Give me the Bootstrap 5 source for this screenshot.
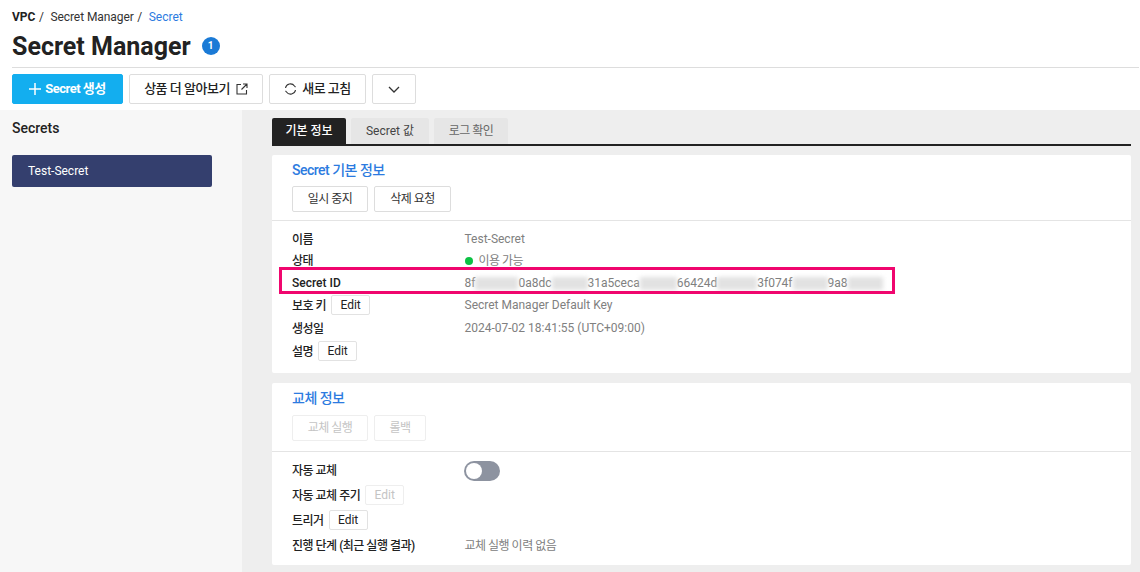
<!DOCTYPE html>
<html lang="ko">
<head>
<meta charset="UTF-8">
<title>Secret Manager</title>
<link href="https://cdn.jsdelivr.net/npm/bootstrap@5.3.2/dist/css/bootstrap.min.css" rel="stylesheet">
<style>
html, body { height: 572px; overflow: hidden; }
body { font-family: Roboto, "Noto Sans CJK KR", sans-serif; font-size: 12px; color: #222; background: #eee; }
.ko { letter-spacing: -0.5px; }
.top-area { background: #fff; height: 110px; padding: 1px 1px 0 12px; }
.crumbs { height: 27px; padding-top: 9px; line-height: 14px; color: #333; }
.crumbs b { font-weight: 700; color: #222; }
.crumb-name { letter-spacing: -0.07px; }
.crumb-sep { margin: 0 6.5px 0 3.5px; }
.crumbs .here { color: #2c7be0; }
.page-title { height: 36px; margin: 0 0 3px; gap: 11px; }
.page-title h1 { font-size: 25px; font-weight: 700; margin: 0; padding-top: 2px; line-height: 30px; color: #222; }
.info-dot { width: 18px; height: 18px; border-radius: 50%; background: #1a7ad6; color: #fff; font-size: 10px; font-weight: 700; line-height: 18px; text-align: center; }
.top-btns { border-top: 1px solid #ddd; padding-top: 6px; gap: 6px; }
.plain-btn { height: 30px; background: #fff; border: 1px solid #ddd; border-radius: 2px; color: #222; font-size: 13px; font-weight: 500; padding: 0; display: inline-flex; align-items: center; justify-content: center; }
.create-btn { width: 111px; background: #13aeef; border-color: #13aeef; color: #fff; font-weight: 700; gap: 4px; }
.btn-more { width: 134px; gap: 6px; }
.btn-refresh { width: 97px; gap: 5px; }
.btn-caret { width: 44px; }
.body-area { height: 462px; }
.side-col { width: 242px; background: #f7f7f7; padding: 10px 30px 0 12px; flex: none; }
.side-col h2 { font-size: 14px; font-weight: 500; line-height: 16px; margin: 0 0 19px; color: #222; }
.side-item { height: 32px; background: #343f6e; color: #fff; border-radius: 2px; padding-left: 16px; line-height: 32px; }
.main-col { flex: 1; padding: 8px 9px 0 30px; }
.tab-row { gap: 5px; border-bottom: 2px solid #222; height: 28px; }
.tab-cell { width: 78px; height: 26px; background: #e6e6e6; color: #444; text-align: center; line-height: 26px; border-radius: 2px 2px 0 0; }
.tab-cell.on { width: 74px; background: #222; color: #fff; font-weight: 500; }
.tab-cell.dim { width: 74px; color: #666; }
.panel { background: #fff; border-radius: 2px; margin-top: 9px; }
.panel + .panel { margin-top: 10px; }
.panel-head { height: 66px; border-bottom: 1px solid #e4e4e4; padding: 7px 20px 0; }
.panel-head h3 { font-size: 14px; font-weight: 500; color: #2c7be0; line-height: 16px; margin: 0 0 8px; }
.head-tall { height: 69px; }
.head-tall h3 { margin-bottom: 9px; }
.head-btns { gap: 6px; }
.head-btns .plain-btn { height: 26px; font-size: 12px; font-weight: 400; color: #333; }
.w-76 { width: 76px; }
.w-77 { width: 77px; }
.w-52 { width: 52px; }
.off-btn { color: #c4c4c4 !important; border-color: #eee !important; }
.info-rows { padding: 7px 20px 10px; }
.info-rows.swap-rows { padding: 6px 20px 7px; }
.info-line { height: 21.5px; align-items: center; color: #808080; position: relative; }
.id-line { height: 22.5px; }
.tall-line { height: 23px; }
.swap-rows .info-line { height: 25px; }
.info-label { width: 172.5px; color: #222; font-weight: 500; gap: 5px; align-items: center; flex: none; }
.lbl { display: block; padding-top: 2px; }
.val-low { padding-top: 2px; }
.edit-btn { width: 39px; height: 20px; background: #fff; border: 1px solid #e2e2e2; border-radius: 2px; color: #222; font-size: 12px; line-height: 18px; text-align: center; padding: 0; letter-spacing: 0; }
.green-dot { width: 8px; height: 8px; border-radius: 50%; background: #0cc244; margin-right: 6px; }
.smudge { display: block; height: 13px; background: #e2e2e2; filter: blur(2px); }
.fz-a { width: 43px; }
.fz-b { width: 36px; }
.fz-c { width: 37px; }
.fz-d { width: 40px; }
.fz-e { width: 35px; }
.mark-box { position: absolute; left: -13px; top: -4px; width: 616px; height: 27px; border: 3px solid #f0066e; pointer-events: none; }
.toggle-off { width: 36px; height: 20px; border-radius: 10px; background: #8d93a0; position: relative; display: block; margin: 1px 0 0 -1px; }
.toggle-off::after { content: ""; position: absolute; left: 2px; top: 2px; width: 16px; height: 16px; border-radius: 50%; background: #fff; }
</style>
</head>
<body>
<div class="top-area">
  <div class="crumbs d-flex"><b>VPC</b><span class="crumb-sep">/</span><span class="crumb-name">Secret Manager</span><span class="crumb-sep">/</span><span class="here">Secret</span></div>
  <div class="page-title d-flex align-items-center">
    <h1>Secret Manager</h1><span class="info-dot">1</span>
  </div>
  <div class="top-btns d-flex">
    <button class="plain-btn create-btn"><svg width="12" height="12" viewBox="0 0 12 12"><path d="M6 0v12M0 6h12" stroke="#fff" stroke-width="1.5"/></svg><span class="ko">Secret 생성</span></button>
    <button class="plain-btn btn-more"><span class="ko">상품 더 알아보기</span><svg width="12" height="12" viewBox="0 0 12 12" fill="none" stroke="#333" stroke-width="1.1"><path d="M5 1.5H1v9.5h9.5V7M7 1h4v4M11 1 5.5 6.5"/></svg></button>
    <button class="plain-btn btn-refresh"><svg width="13" height="12" viewBox="0 0 12 12" fill="none" stroke="#333" stroke-width="1.1"><path d="M1 5a5 5 0 0 1 9-2l1 1.2M11 7a5 5 0 0 1-9 2L1 7.8"/></svg><span class="ko">새로 고침</span></button>
    <button class="plain-btn btn-caret"><svg width="12" height="7" viewBox="0 0 12 7" fill="none" stroke="#333" stroke-width="1.3"><path d="m1 1 5 5 5-5"/></svg></button>
  </div>
</div>
<div class="body-area d-flex">
  <div class="side-col">
    <h2>Secrets</h2>
    <div class="side-item">Test-Secret</div>
  </div>
  <div class="main-col">
    <div class="tab-row d-flex">
      <div class="tab-cell on">기본 정보</div><div class="tab-cell">Secret 값</div><div class="tab-cell dim ko">로그 확인</div>
    </div>
    <div class="panel">
      <div class="panel-head">
        <h3 class="ko">Secret 기본 정보</h3>
        <div class="head-btns d-flex"><button class="plain-btn w-76 ko">일시 중지</button><button class="plain-btn w-77 ko">삭제 요청</button></div>
      </div>
      <div class="info-rows">
        <div class="info-line d-flex"><div class="info-label d-flex"><span class="lbl ko">이름</span></div><div>Test-Secret</div></div>
        <div class="info-line d-flex"><div class="info-label d-flex"><span class="lbl ko">상태</span></div><div class="d-flex align-items-center ko val-low"><span class="green-dot"></span>이용 가능</div></div>
        <div class="info-line id-line d-flex"><div class="info-label d-flex"><span class="lbl">Secret ID</span></div><div class="d-flex align-items-center val-low">8f<span class="smudge fz-a"></span>0a8dc<span class="smudge fz-b"></span>31a5ceca<span class="smudge fz-c"></span>66424d<span class="smudge fz-d"></span>3f074f<span class="smudge fz-e"></span>9a8<span class="smudge fz-e"></span></div><span class="mark-box"></span></div>
        <div class="info-line tall-line d-flex"><div class="info-label d-flex"><span class="lbl ko">보호 키</span><button class="edit-btn">Edit</button></div><div>Secret Manager Default Key</div></div>
        <div class="info-line tall-line d-flex"><div class="info-label d-flex"><span class="lbl ko">생성일</span></div><div>2024-07-02 18:41:55 (UTC+09:00)</div></div>
        <div class="info-line tall-line d-flex"><div class="info-label d-flex"><span class="lbl ko">설명</span><button class="edit-btn">Edit</button></div></div>
      </div>
    </div>
    <div class="panel">
      <div class="panel-head head-tall">
        <h3 class="ko">교체 정보</h3>
        <div class="head-btns d-flex"><button class="plain-btn w-76 off-btn ko">교체 실행</button><button class="plain-btn w-52 off-btn ko">롤백</button></div>
      </div>
      <div class="info-rows swap-rows">
        <div class="info-line d-flex"><div class="info-label d-flex"><span class="lbl ko">자동 교체</span></div><span class="toggle-off"></span></div>
        <div class="info-line d-flex"><div class="info-label d-flex"><span class="lbl ko">자동 교체 주기</span><button class="edit-btn off-btn">Edit</button></div></div>
        <div class="info-line d-flex"><div class="info-label d-flex"><span class="lbl ko">트리거</span><button class="edit-btn">Edit</button></div></div>
        <div class="info-line d-flex"><div class="info-label d-flex"><span class="lbl ko">진행 단계 (최근 실행 결과)</span></div><div class="ko val-low">교체 실행 이력 없음</div></div>
      </div>
    </div>
  </div>
</div>
<script src="https://cdn.jsdelivr.net/npm/bootstrap@5.3.2/dist/js/bootstrap.bundle.min.js"></script>
</body>
</html>
